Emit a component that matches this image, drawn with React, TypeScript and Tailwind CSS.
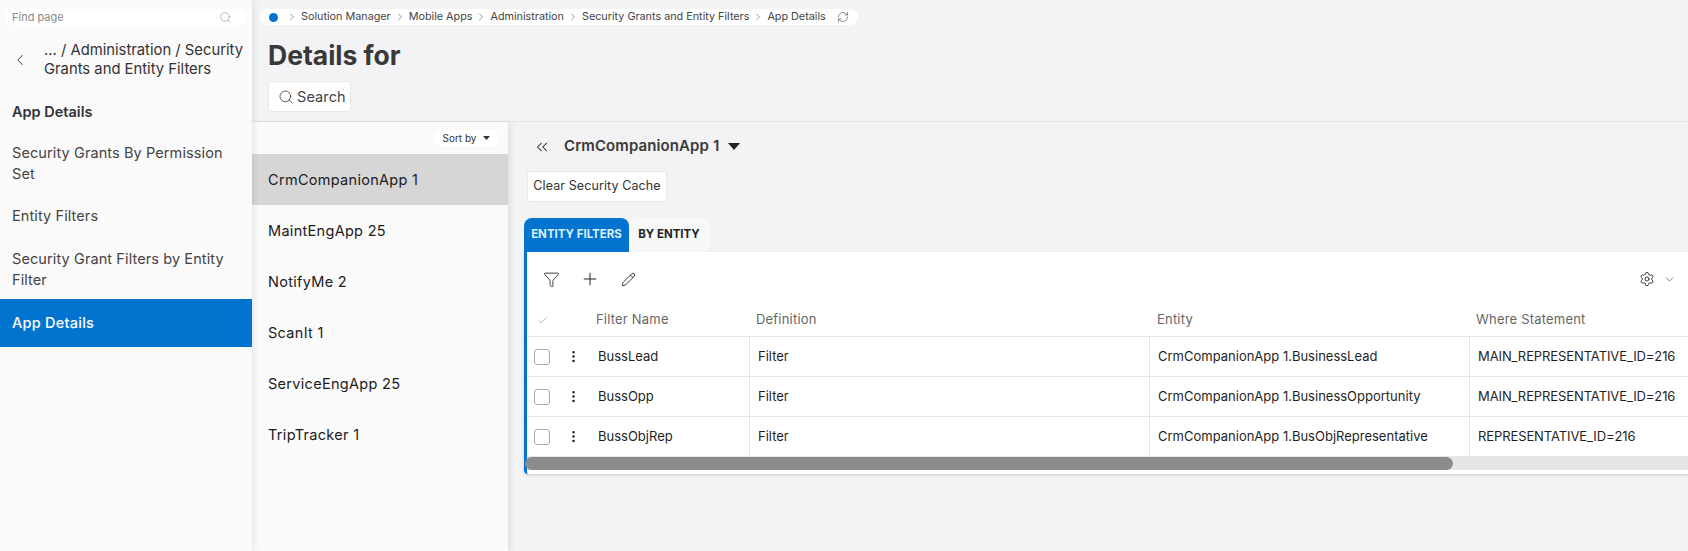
import React from "react";
import { ChevronLeft, ChevronRight, ChevronDown, ChevronsLeft, Search, RefreshCw, Funnel, Plus, Pencil, Settings, Check, EllipsisVertical } from "lucide-react";

const apps = ["CrmCompanionApp 1", "MaintEngApp 25", "NotifyMe 2", "ScanIt 1", "ServiceEngApp 25", "TripTracker 1"];
const crumbs = ["Solution Manager", "Mobile Apps", "Administration", "Security Grants and Entity Filters", "App Details"];
const rows = [
  ["BussLead", "Filter", "CrmCompanionApp 1.BusinessLead", "MAIN_REPRESENTATIVE_ID=216"],
  ["BussOpp", "Filter", "CrmCompanionApp 1.BusinessOpportunity", "MAIN_REPRESENTATIVE_ID=216"],
  ["BussObjRep", "Filter", "CrmCompanionApp 1.BusObjRepresentative", "REPRESENTATIVE_ID=216"],
];

const Caret = ({ className }: { className: string }) => (
  <svg viewBox="0 0 12 7" className={className} fill="currentColor">
    <path d="M0 0h12L6 7z" />
  </svg>
);

const Sidebar = () => (
  <aside className="w-[252px] shrink-0 bg-[#fafafa] z-20 shadow-[2px_0_6px_rgba(0,0,0,0.08)] flex flex-col">
    <div className="mt-[9px] mx-[5px] h-[16px] rounded-full bg-white flex items-center justify-between pl-[7px] pr-[15px] text-[11px] text-[#8a8a8a]">
      <span>Find page</span>
      <Search size={13} strokeWidth={1.2} className="text-[#999]" />
    </div>
    <div className="flex mt-[16px] text-[#333] text-[14.8px] leading-[19px]">
      <div className="w-[44px] shrink-0 flex items-center pl-[11px]">
        <ChevronLeft size={18} strokeWidth={1.3} />
      </div>
      <div className="whitespace-nowrap">
        ... / Administration / Security
        <br />
        Grants and Entity Filters
      </div>
    </div>
    <div className="mt-[23px] px-[12px] text-[14.5px] leading-[20px] font-semibold text-[#333]">App Details</div>
    <div className="mt-[20px] px-[12px] text-[14.5px] leading-[21px] text-[#444] tracking-[0.1px] whitespace-nowrap">
      Security Grants By Permission
      <br />
      Set
    </div>
    <div className="mt-[21px] px-[12px] text-[14.5px] leading-[21px] text-[#444] tracking-[0.1px]">Entity Filters</div>
    <div className="mt-[22px] px-[12px] text-[14.5px] leading-[21px] text-[#444] tracking-[0.1px] whitespace-nowrap">
      Security Grant Filters by Entity
      <br />
      Filter
    </div>
    <div className="mt-[9px] h-[48px] bg-[#0274d0] text-white flex items-center px-[12px] text-[14.5px] font-medium tracking-[0.25px]">
      App Details
    </div>
  </aside>
);

const Header = () => (
  <header className="h-[122px] shrink-0 border-b border-[#e4e4e6] px-[8px] pt-[9px]">
    <div className="w-[598px] h-[16px] rounded-full bg-white flex items-center pl-[9px] text-[10.8px] text-[#444] whitespace-nowrap">
      <span className="w-[9px] h-[9px] shrink-0 rounded-full bg-[#0274d0] mr-[8px]" />
      {crumbs.map((c) => (
        <React.Fragment key={c}>
          <ChevronRight size={12} strokeWidth={1.2} className="shrink-0 mr-[3px] text-[#555]" />
          <span className="mr-[3px]">{c}</span>
        </React.Fragment>
      ))}
      <RefreshCw size={12} strokeWidth={1.3} className="shrink-0 ml-[8px] text-[#555]" />
    </div>
    <h1 className="pl-[8px] mt-[13px] text-[26.5px] leading-[34px] font-bold text-[#383838]">Details for</h1>
    <button className="ml-[8px] mt-[9px] w-[83px] h-[31px] bg-white border border-[#e8e8e8] rounded-[3px] flex items-center pl-[9px] gap-[3px] text-[14.5px] text-[#444] tracking-[0.1px]">
      <Search size={16} strokeWidth={1.3} />
      Search
    </button>
  </header>
);

const AppList = () => (
  <div className="w-[256px] shrink-0 bg-[#fafafa] shadow-[3px_0_5px_rgba(0,0,0,0.07)] z-10 flex flex-col">
    <div className="flex justify-end pt-[8px] pr-[9px] h-[32px]">
      <div className="w-[65px] h-[16px] rounded-full bg-white flex items-center justify-center gap-[7px] text-[10px] text-[#333]">
        Sort by
        <Caret className="w-[7px] h-[4px]" />
      </div>
    </div>
    {apps.map((a, i) => (
      <div
        key={a}
        className={`h-[51px] flex items-center px-[16px] text-[14.5px] text-[#1c1c1c] tracking-[0.3px] ${i === 0 ? "bg-[#d6d6d6]" : ""}`}
      >
        {a}
      </div>
    ))}
  </div>
);

const Table = () => (
  <div className="border-l-[3px] border-[#0274d0] bg-white rounded-bl-[4px] shadow-[0_1px_3px_rgba(0,0,0,0.15)]">
    <div className="h-[52px] pt-[2px] flex items-center justify-between pl-[16px] pr-[12px] text-[#222]">
      <div className="flex items-center">
        <Funnel size={17} strokeWidth={1.2} />
        <Plus size={20} strokeWidth={1.2} className="ml-[20px]" />
        <Pencil size={15} strokeWidth={1.4} className="ml-[21px]" />
      </div>
      <div className="flex items-center gap-[8px]">
        <Settings size={16} strokeWidth={1.3} />
        <ChevronDown size={13} strokeWidth={1.2} className="text-[#444]" />
      </div>
    </div>
    <div className="h-[33px] flex border-b border-[#e6e6e6] text-[13px] text-[#666] tracking-[0.2px]">
      <div className="w-[223px] shrink-0 flex pt-[6px]">
        <Check size={11} strokeWidth={1.1} className="ml-[10px] mt-[5px] text-[#666]" />
        <span className="ml-[48px]">Filter Name</span>
      </div>
      <div className="w-[400px] shrink-0 pl-[6px] pt-[6px]">Definition</div>
      <div className="w-[320px] shrink-0 pl-[7px] pt-[6px]">Entity</div>
      <div className="pl-[6px] pt-[6px] whitespace-nowrap">Where Statement</div>
    </div>
    {rows.map((r) => (
      <div key={r[0]} className="h-[40px] flex border-b border-[#e6e6e6] text-[13px] text-[#1f1f1f] whitespace-nowrap">
        <div className="w-[223px] shrink-0 flex items-center border-r border-[#e6e6e6]">
          <span className="ml-[7px] w-[16px] h-[16px] shrink-0 rounded-[3px] border border-[#aaa] bg-white" />
          <EllipsisVertical size={15} strokeWidth={2} className="ml-[16px] text-[#222]" />
          <span className="ml-[17px]">{r[0]}</span>
        </div>
        <div className="w-[400px] shrink-0 flex items-center pl-[8px] border-r border-[#e6e6e6]">{r[1]}</div>
        <div className="w-[320px] shrink-0 flex items-center pl-[8px] border-r border-[#e6e6e6]">{r[2]}</div>
        <div className="flex items-center pl-[8px] tracking-[-0.1px]">{r[3]}</div>
      </div>
    ))}
    <div className="h-[13px] bg-[#e6e6e6]">
      <div className="w-[928px] -ml-[2px] h-full rounded-full bg-[#8c8c8c]" />
    </div>
    <div className="h-[4px]" />
  </div>
);

const Detail = () => (
  <div className="flex-1 min-w-0 pl-[16px] flex flex-col">
    <div className="h-[49px] shrink-0 flex items-center pl-[9px] text-[#222]">
      <ChevronsLeft size={18} strokeWidth={1.4} />
      <span className="ml-[13px] text-[15px] font-semibold text-[#3a3a3a] tracking-[0.1px]">CrmCompanionApp 1</span>
      <Caret className="ml-[9px] w-[12px] h-[7px]" />
    </div>
    <button className="ml-[3px] w-[140px] h-[31px] shrink-0 bg-white border border-[#e8e8e8] rounded-[3px] text-[12.5px] text-[#333] tracking-[0.1px]">
      Clear Security Cache
    </button>
    <div className="mt-[16px] flex h-[34px] shrink-0">
      <div className="w-[105px] rounded-t-[8px] bg-[#0274d0] text-[#d8efff] text-[11.5px] font-bold flex items-center justify-center">
        ENTITY FILTERS
      </div>
      <div className="w-[80px] rounded-t-[8px] bg-[#f8f8f8] text-[#222] text-[11.5px] font-bold flex items-center justify-center">
        BY ENTITY
      </div>
    </div>
    <Table />
  </div>
);

export default function App() {
  return (
    <div className="w-[1688px] h-[551px] overflow-hidden flex bg-[#f3f2f5] font-['Inter',sans-serif]">
      <Sidebar />
      <main className="flex-1 min-w-0 flex flex-col">
        <Header />
        <div className="flex-1 min-h-0 flex">
          <AppList />
          <Detail />
        </div>
      </main>
    </div>
  );
}
